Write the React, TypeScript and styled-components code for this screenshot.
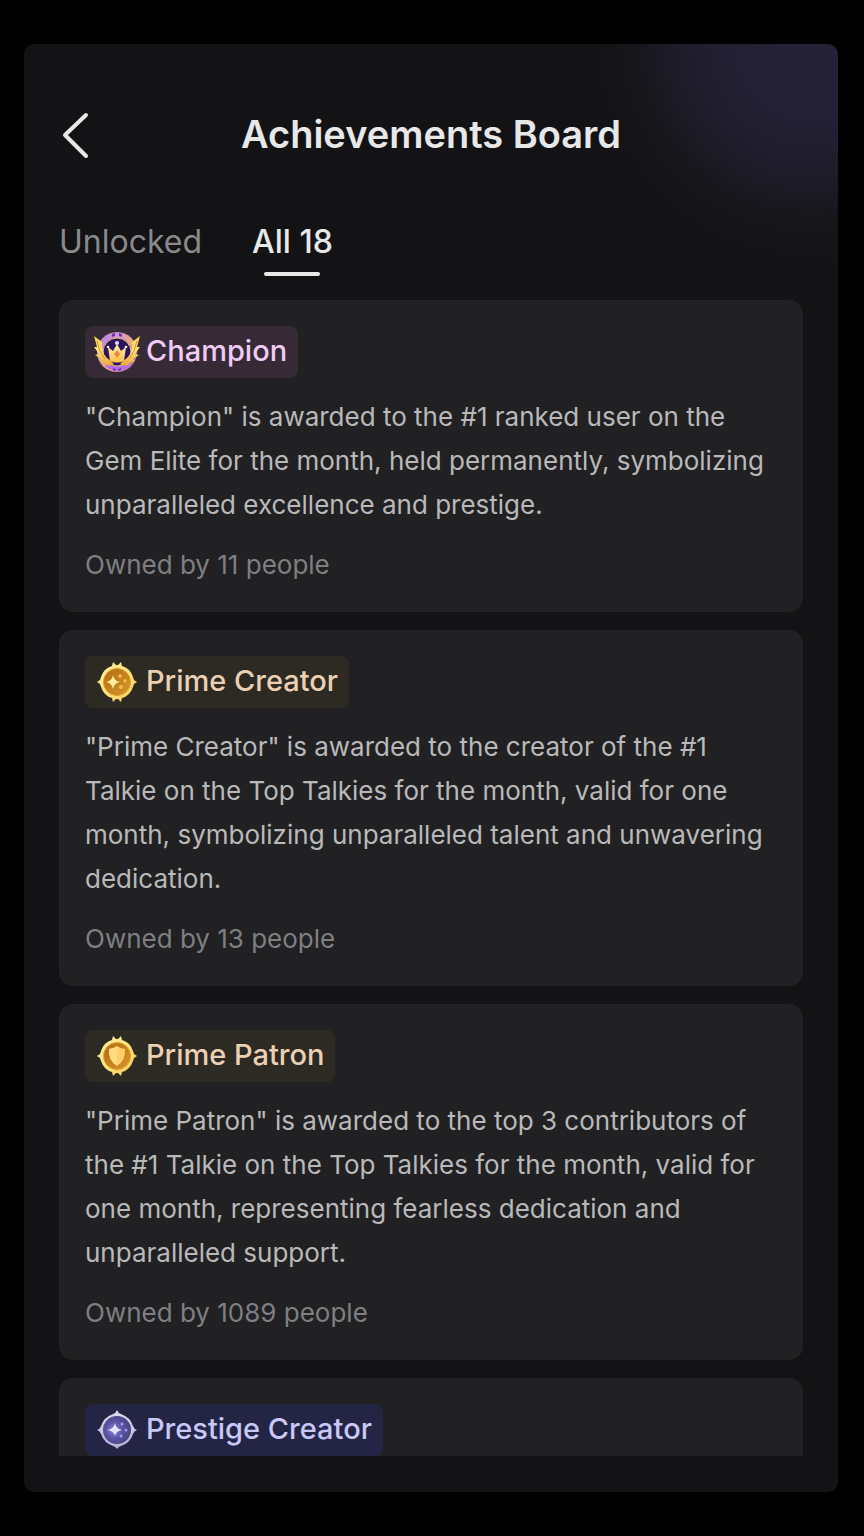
import React from "react";
import styled, { createGlobalStyle } from "styled-components";

const GlobalStyle = createGlobalStyle`
  * { box-sizing: border-box; }
  body {
    margin: 0;
    background: #000;
    font-family: Inter, "Liberation Sans", sans-serif;
  }
  button { font: inherit; border: 0; background: none; padding: 0; cursor: pointer; }
`;

const Page = styled.div`
  height: 100vh;
  padding: 44px 26px 44px 24px;
`;

const Screen = styled.main`
  height: 100%;
  display: flex;
  flex-direction: column;
  padding: 60px 35px 36px;
  border-radius: 10px;
  overflow: hidden;
  background:
    radial-gradient(circle 225px at calc(100% - 28px) 0, #262137 0, #242034 36%, #1e1c2a 58%, #17161b 78%, #131315 100%),
    #131315;
`;

const Header = styled.header`
  display: grid;
  grid-template-columns: 60px 1fr 60px;
  align-items: center;
  height: 62px;
`;

const BackButton = styled.button`
  display: flex;
  color: #e8e8e9;
`;

const Title = styled.h1`
  margin: 0;
  padding-bottom: 2px;
  text-align: center;
  font-size: 38px;
  line-height: 48px;
  font-weight: 600;
  color: #e8e8e9;
`;

const Tabs = styled.div`
  display: flex;
  gap: 50px;
  margin: 56px 0 24px;
`;

const Tab = styled.button<{ $active?: boolean }>`
  display: flex;
  flex-direction: column;
  align-items: center;
  gap: 10px;
  font-size: 32px;
  line-height: 40px;
  font-weight: ${(p) => (p.$active ? 500 : 400)};
  color: ${(p) => (p.$active ? "#e8e8e9" : "#8a8a8c")};

  &::after {
    content: "";
    width: 56px;
    height: 4px;
    border-radius: 2px;
    background: ${(p) => (p.$active ? "#e8e8e9" : "transparent")};
  }
`;

const List = styled.div`
  flex: 1;
  min-height: 0;
  display: flex;
  flex-direction: column;
  gap: 18px;
  overflow-y: auto;
  scrollbar-width: none;
`;

const Card = styled.article`
  flex: none;
  padding: 26px 26px 29px;
  border-radius: 14px;
  background: #212123;
`;

const Badge = styled.h2<{ $bg: string; $color: string }>`
  display: flex;
  align-items: center;
  gap: 5px;
  width: fit-content;
  height: 52px;
  margin: 0;
  padding: 0 11px 2px 8px;
  border-radius: 8px;
  background: ${(p) => p.$bg};
  color: ${(p) => p.$color};
  font-size: 29px;
  line-height: 40px;
  font-weight: 500;

  svg { margin-top: 2px; }
`;

const Description = styled.p`
  margin: 17px 0 20px;
  font-size: 26px;
  line-height: 44px;
  color: #b9b9ba;
`;

const Owned = styled.p`
  margin: 0;
  font-size: 26px;
  line-height: 36px;
  color: #7f7f81;
`;

const ChampionIcon = () => (
  <svg width="48" height="48" viewBox="0 0 48 48" aria-hidden="true">
    <defs>
      <linearGradient id="champRing" x1="0" y1="0" x2="1" y2="1">
        <stop offset="0" stopColor="#a878f0" />
        <stop offset=".35" stopColor="#d89ac0" />
        <stop offset=".55" stopColor="#f0a878" />
        <stop offset="1" stopColor="#9a58e0" />
      </linearGradient>
      <linearGradient id="champWing" x1="0" y1="0" x2="0" y2="1">
        <stop offset="0" stopColor="#f8d050" />
        <stop offset=".5" stopColor="#ffe27a" />
        <stop offset="1" stopColor="#eda636" />
      </linearGradient>
      <linearGradient id="champCrown" x1="0" y1="0" x2="0" y2="1">
        <stop offset="0" stopColor="#fff0b0" />
        <stop offset="1" stopColor="#ffc04a" />
      </linearGradient>
    </defs>
    <circle cx="24" cy="24" r="20" fill="url(#champRing)" />
    <path d="M12 38 Q24 47 36 38 L33 35 Q24 42 15 35 Z" fill="#b06cf4" />
    <path d="M19 6 L22 5 L22 8 L19 9 Z M29 6 L26 5 L26 8 L29 9 Z M20 40 L23 41 L23 43 L20 42 Z M28 40 L25 41 L25 43 L28 42 Z" fill="#6a32b8" />
    <circle cx="24" cy="24" r="14" fill="#2c1560" stroke="#e8b47c" />
    <path d="M1 8 L9 14 Q8 23 13 29 L21 36 Q18 39 13 37 L10 34 L6 33 L8 31 L2 27 L6 26 L1 19 L4 19 Z" fill="url(#champWing)" />
    <path d="M47 8 L39 14 Q40 23 35 29 L27 36 Q30 39 35 37 L38 34 L42 33 L40 31 L46 27 L42 26 L47 19 L44 19 Z" fill="url(#champWing)" />
    <path d="M4 13 L7 23 L12 31 M44 13 L41 23 L36 31" fill="none" stroke="#d8932e" strokeWidth="1" />
    <path d="M15 19 L20 23 L24 16 L28 23 L33 19 L31 33 Q24 36 17 33 Z" fill="url(#champCrown)" />
    <path d="M24 22 L27 26 L24 30 L21 26 Z" fill="#f08440" />
    <circle cx="24" cy="15" r="2" fill="#e4dcff" />
    <circle cx="15" cy="19" r="1.3" fill="#fff0b0" />
    <circle cx="33" cy="19" r="1.3" fill="#fff0b0" />
  </svg>
);

const PrimeCoin = ({ id, children }: { id: string; children: React.ReactNode }) => (
  <svg width="48" height="48" viewBox="0 0 48 48" aria-hidden="true">
    <defs>
      <linearGradient id={`${id}Rim`} x1="0" y1="0" x2="1" y2="1">
        <stop offset="0" stopColor="#fff2a8" />
        <stop offset=".5" stopColor="#ffe27c" />
        <stop offset="1" stopColor="#f6c656" />
      </linearGradient>
      <linearGradient id={`${id}Face`} x1="0" y1="0" x2="1" y2="1">
        <stop offset="0" stopColor="#b06c12" />
        <stop offset="1" stopColor="#d8962a" />
      </linearGradient>
    </defs>
    <path
      d="M19 8 L20 4 L23 7 L25 7 L28 4 L29 8 Q37 10 40 19 L41 22 L44 24 L41 26 L40 29 Q37 38 29 40 L28 44 L25 41 L23 41 L20 44 L19 40 Q11 38 8 29 L7 26 L4 24 L7 22 L8 19 Q11 10 19 8 Z"
      fill={`url(#${id}Rim)`}
    />
    <circle cx="24" cy="24" r="13.5" fill={`url(#${id}Face)`} stroke="#e0a032" />
    {children}
  </svg>
);

const PrimeCreatorIcon = () => (
  <PrimeCoin id="creator">
    <path d="M20 17 Q21 23 27 24 Q21 25 20 31 Q19 25 13 24 Q19 23 20 17 Z" fill="#fff0a0" />
    <circle cx="27" cy="18" r="1.8" fill="#f0bc50" />
    <circle cx="32" cy="23" r="1.8" fill="#f0bc50" />
    <circle cx="28" cy="29" r="2" fill="#f0bc50" />
  </PrimeCoin>
);

const PrimePatronIcon = () => (
  <PrimeCoin id="patron">
    <path d="M24 14 Q28 17 32 17 Q33 28 24 34 Q15 28 16 17 Q20 17 24 14 Z" fill="#ffcf68" />
    <path d="M24 14 Q20 17 16 17 Q15 28 24 34 Z" fill="#ffda80" />
  </PrimeCoin>
);

const PrestigeIcon = () => (
  <svg width="48" height="48" viewBox="0 0 48 48" aria-hidden="true">
    <defs>
      <radialGradient id="prestigeFill" cx=".4" cy=".5" r=".6">
        <stop offset="0" stopColor="#8f86e8" />
        <stop offset=".5" stopColor="#5a54a4" />
        <stop offset="1" stopColor="#48447e" />
      </radialGradient>
      <linearGradient id="prestigeRim" x1="0" y1="0" x2="0" y2="1">
        <stop offset="0" stopColor="#dedcf2" />
        <stop offset="1" stopColor="#b4b0d0" />
      </linearGradient>
    </defs>
    <path
      d="M24 4 Q25 7 28 8 Q37 11 40 20 Q41 23 44 24 Q41 25 40 28 Q37 37 28 40 Q25 41 24 43 Q23 41 20 40 Q11 37 8 28 Q7 25 4 24 Q7 23 8 20 Q11 11 20 8 Q23 7 24 4 Z"
      fill="url(#prestigeRim)"
    />
    <circle cx="24" cy="24" r="14" fill="url(#prestigeFill)" />
    <path d="M22 17 Q23 23 29 24 Q23 25 22 30 Q21 25 14 24 Q21 23 22 17 Z" fill="#e8e4ff" />
    <circle cx="29" cy="18" r="1.5" fill="#a49ce0" />
    <circle cx="33" cy="24" r="1.5" fill="#a49ce0" />
    <circle cx="28" cy="30" r="1.5" fill="#a49ce0" />
  </svg>
);

type Achievement = {
  name: string;
  icon: React.ReactNode;
  bg: string;
  color: string;
  text?: string;
  owners?: number;
};

const achievements: Achievement[] = [
  {
    name: "Champion",
    icon: <ChampionIcon />,
    bg: "#352a35",
    color: "#f0ccf5",
    text: '"Champion" is awarded to the #1 ranked user on the Gem Elite for the month, held permanently, symbolizing unparalleled excellence and prestige.',
    owners: 11,
  },
  {
    name: "Prime Creator",
    icon: <PrimeCreatorIcon />,
    bg: "#2d2a23",
    color: "#ebd0b4",
    text: '"Prime Creator" is awarded to the creator of the #1 Talkie on the Top Talkies for the month, valid for one month, symbolizing unparalleled talent and unwavering dedication.',
    owners: 13,
  },
  {
    name: "Prime Patron",
    icon: <PrimePatronIcon />,
    bg: "#2d2a23",
    color: "#ebd0b4",
    text: '"Prime Patron" is awarded to the top 3 contributors of the #1 Talkie on the Top Talkies for the month, valid for one month, representing fearless dedication and unparalleled support.',
    owners: 1089,
  },
  { name: "Prestige Creator", icon: <PrestigeIcon />, bg: "#242444", color: "#c8c8f8" },
];

export default function App() {
  return (
    <>
      <GlobalStyle />
      <Page>
        <Screen>
          <Header>
            <BackButton type="button" aria-label="Back">
              <svg width="32" height="48" viewBox="0 0 32 48" fill="none" stroke="currentColor" strokeWidth="4" strokeLinecap="round" strokeLinejoin="round">
                <path d="M27 4 L6 24 L27 45" />
              </svg>
            </BackButton>
            <Title>Achievements Board</Title>
          </Header>
          <Tabs role="tablist">
            <Tab type="button" role="tab" aria-selected={false}>Unlocked</Tab>
            <Tab type="button" role="tab" aria-selected $active>All 18</Tab>
          </Tabs>
          <List>
            {achievements.map((a) => (
              <Card key={a.name}>
                <Badge $bg={a.bg} $color={a.color}>
                  {a.icon}
                  {a.name}
                </Badge>
                {a.text && <Description>{a.text}</Description>}
                {a.owners && <Owned>{`Owned by ${a.owners} people`}</Owned>}
              </Card>
            ))}
          </List>
        </Screen>
      </Page>
    </>
  );
}
